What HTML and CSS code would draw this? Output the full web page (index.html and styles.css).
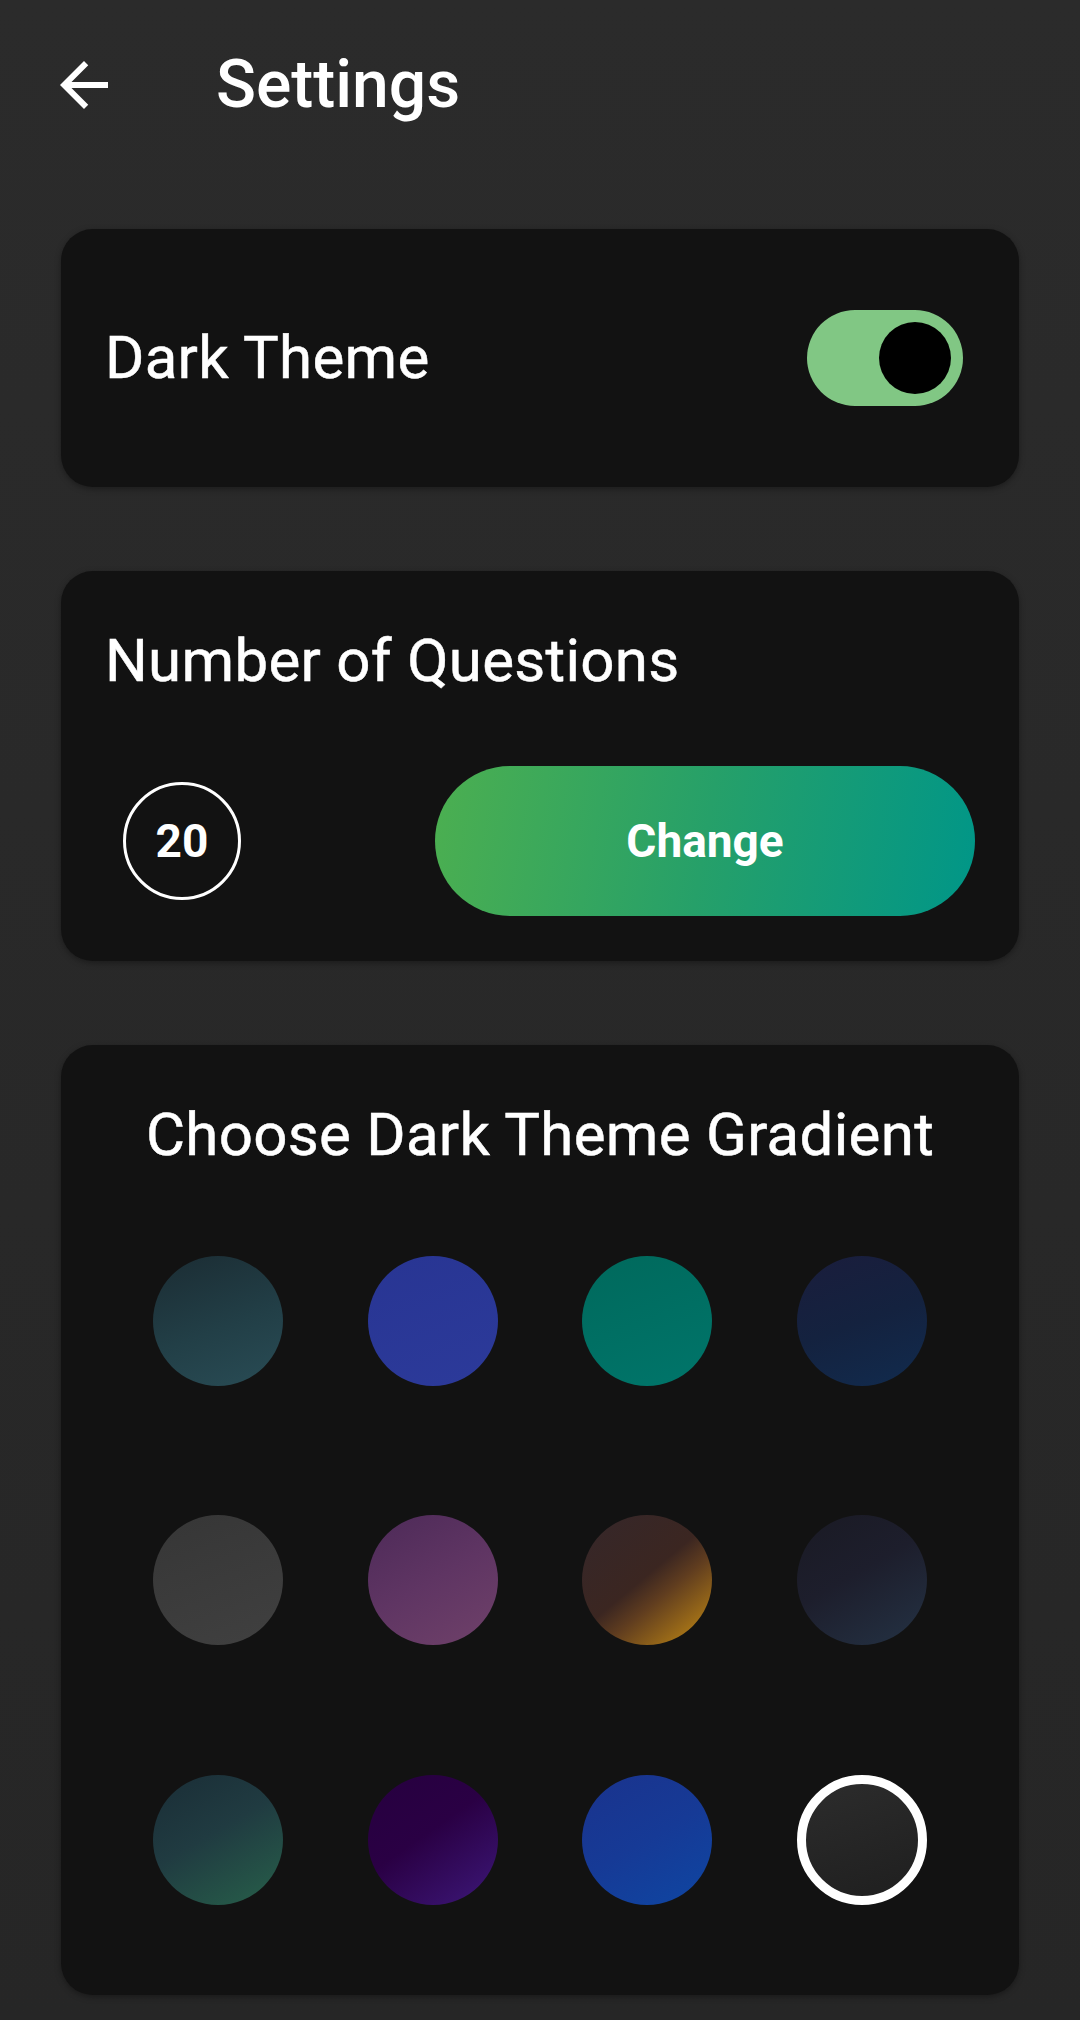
FILE: index.html
```html
<!DOCTYPE html>
<html lang="en">
<head>
<meta charset="utf-8">
<title>Settings</title>
<link rel="stylesheet" href="styles.css">
</head>
<body>
<div class="screen">
  <header class="toolbar">
    <button class="back" aria-label="Back">
      <svg viewBox="0 0 24 24" width="72" height="72"><path d="M20 11H7.83l5.59-5.59L12 4l-8 8 8 8 1.41-1.41L7.83 13H20v-2z" fill="#ffffff"/></svg>
    </button>
    <h1 class="title">Settings</h1>
  </header>

  <main class="content">
    <section class="card card-theme">
      <span class="label">Dark Theme</span>
      <div class="switch"><span class="thumb"></span></div>
    </section>

    <section class="card card-questions">
      <div class="label">Number of Questions</div>
      <div class="q-row">
        <div class="count">20</div>
        <button class="change">Change</button>
      </div>
    </section>

    <section class="card card-gradient">
      <div class="label label-center">Choose Dark Theme Gradient</div>
      <div class="swatches">
        <span class="swatch g1"></span>
        <span class="swatch g2"></span>
        <span class="swatch g3"></span>
        <span class="swatch g4"></span>
        <span class="swatch g5"></span>
        <span class="swatch g6"></span>
        <span class="swatch g7"></span>
        <span class="swatch g8"></span>
        <span class="swatch g9"></span>
        <span class="swatch g10"></span>
        <span class="swatch g11"></span>
        <span class="swatch g12 selected"></span>
      </div>
    </section>
  </main>
</div>
</body>
</html>
```

FILE: styles.css
```css
html, body {
  margin: 0;
  padding: 0;
}
body {
  background: linear-gradient(#2b2b2b, #262626);
  font-family: Roboto, "Noto Sans", "Liberation Sans", sans-serif;
  color: #ffffff;
  min-height: 2020px;
}
.screen {
  width: 1080px;
}
.toolbar {
  height: 170px;
  display: flex;
  align-items: center;
  padding-left: 48px;
  box-sizing: border-box;
}
.back {
  width: 72px;
  height: 72px;
  padding: 0;
  margin: 0;
  border: 0;
  background: none;
  display: flex;
}
.title {
  margin: 0 0 0 96px;
  font-size: 66px;
  line-height: 66px;
  font-weight: 500;
}
.content {
  padding: 59px 61px 0;
  display: flex;
  flex-direction: column;
  gap: 84px;
}
.card {
  background: #121212;
  border-radius: 32px;
  box-shadow: 0 2px 6px rgba(0, 0, 0, 0.35);
  box-sizing: border-box;
}
.label {
  font-size: 60px;
  line-height: 70px;
  font-weight: 400;
  letter-spacing: 0.3px;
  -webkit-text-stroke: 0.5px #ffffff;
}
.label-center {
  text-align: center;
}
.card-theme {
  height: 258px;
  display: flex;
  align-items: center;
  justify-content: space-between;
  padding: 0 56px 0 44px;
}
.switch {
  width: 156px;
  height: 96px;
  border-radius: 48px;
  background: #81c784;
  display: flex;
  align-items: center;
  justify-content: flex-end;
  padding-right: 12px;
  box-sizing: border-box;
}
.thumb {
  width: 72px;
  height: 72px;
  border-radius: 50%;
  background: #000000;
}
.card-questions {
  padding: 55px 44px 45px;
}
.q-row {
  margin-top: 70px;
  height: 150px;
  display: flex;
  align-items: center;
  justify-content: space-between;
}
.count {
  width: 118px;
  height: 118px;
  margin-left: 18px;
  box-sizing: border-box;
  border: 3px solid #ffffff;
  border-radius: 50%;
  display: flex;
  align-items: center;
  justify-content: center;
  font-size: 46px;
  font-weight: 700;
}
.change {
  width: 540px;
  height: 150px;
  border: 0;
  border-radius: 75px;
  background: linear-gradient(100deg, #4caf50 0%, #26a069 50%, #009688 100%);
  color: #ffffff;
  font-family: Roboto, "Noto Sans", "Liberation Sans", sans-serif;
  font-size: 46px;
  font-weight: 700;
  padding: 0;
}
.card-gradient {
  padding: 55px 0 90px;
}
.swatches {
  margin-top: 85.6px;
  display: grid;
  grid-template-columns: repeat(4, 130px);
  grid-auto-rows: 130px;
  column-gap: 84.4px;
  row-gap: 129.5px;
  justify-content: center;
}
.swatch {
  width: 130px;
  height: 130px;
  border-radius: 50%;
  box-sizing: border-box;
}
.g1 { background: linear-gradient(160deg, #1b2c33 0%, #223f47 55%, #294c55 100%); }
.g2 { background: linear-gradient(160deg, #283593 0%, #2c3a9a 100%); }
.g3 { background: linear-gradient(160deg, #00695c 0%, #00756a 100%); }
.g4 { background: linear-gradient(160deg, #1a1d3c 0%, #14223f 50%, #112b4e 100%); }
.g5 { background: linear-gradient(160deg, #363636 0%, #404040 100%); }
.g6 { background: linear-gradient(150deg, #4d2a58 0%, #5f3563 50%, #6f4169 100%); }
.g7 { background: linear-gradient(140deg, #35272a 0%, #3b2621 48%, #603d1f 62%, #c98f12 100%); }
.g8 { background: linear-gradient(150deg, #1a1a24 0%, #1d1e2c 45%, #243244 100%); }
.g9 { background: linear-gradient(150deg, #1a2d36 0%, #203b41 45%, #27604a 100%); }
.g10 { background: linear-gradient(145deg, #26003f 0%, #2a0044 45%, #3d187a 100%); }
.g11 { background: linear-gradient(150deg, #1a338d 0%, #163a96 50%, #0e46a2 100%); }
.g12 { background: linear-gradient(160deg, #2c2c2c 0%, #1f1f1f 100%); }
.selected {
  border: 9px solid #ffffff;
}
```
